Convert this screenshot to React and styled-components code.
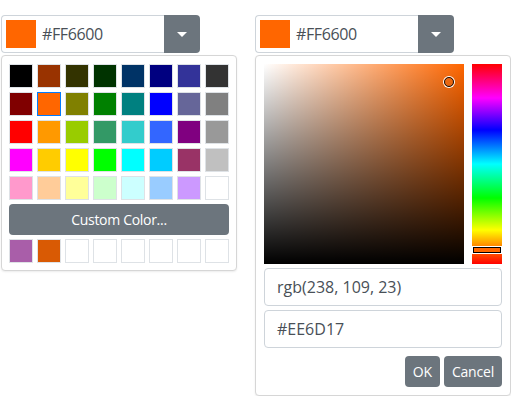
import React from 'react';
import styled, { createGlobalStyle } from 'styled-components';

const GlobalStyle = createGlobalStyle`
  body {
    margin: 0;
    background: #fff;
    font-family: 'Segoe UI', 'Open Sans', sans-serif;
  }
`;

const PALETTE = [
  '#000000', '#993300', '#333300', '#003300', '#003366', '#000080', '#333399', '#333333',
  '#800000', '#FF6600', '#808000', '#008000', '#008080', '#0000FF', '#666699', '#808080',
  '#FF0000', '#FF9900', '#99CC00', '#339966', '#33CCCC', '#3366FF', '#800080', '#999999',
  '#FF00FF', '#FFCC00', '#FFFF00', '#00FF00', '#00FFFF', '#00CCFF', '#993366', '#C0C0C0',
  '#FF99CC', '#FFCC99', '#FFFF99', '#CCFFCC', '#CCFFFF', '#99CCFF', '#CC99FF', '#FFFFFF',
];

const RECENT = ['#A95EA9', '#D95A04', '#fff', '#fff', '#fff', '#fff', '#fff', '#fff'];

function ColorInput({ value }) {
  return (
    <InputGroup>
      <Field>
        <Preview $color={value} />
        <FieldText>{value}</FieldText>
      </Field>
      <ToggleButton>
        <Caret />
      </ToggleButton>
    </InputGroup>
  );
}

export default function App() {
  return (
    <>
      <GlobalStyle />
      <Page>
        <Picker $width={236}>
          <ColorInput value="#FF6600" />
          <Panel $pad="8px 7px 7px">
            <SwatchGrid>
              {PALETTE.map((c, i) => (
                <Swatch key={i} $color={c} $active={c === '#FF6600'} />
              ))}
            </SwatchGrid>
            <CustomButton>Custom Color...</CustomButton>
            <SwatchGrid>
              {RECENT.map((c, i) => (
                <Swatch key={i} $color={c} />
              ))}
            </SwatchGrid>
          </Panel>
        </Picker>

        <Picker $width={256}>
          <ColorInput value="#FF6600" />
          <Panel $pad="8px">
            <SpectrumRow>
              <Saturation $hue="#FF6600">
                <SatHandle style={{ left: 180, top: 13 }} />
              </Saturation>
              <HueBar>
                <HueHandle style={{ top: 183 }} />
              </HueBar>
            </SpectrumRow>
            <TextBox>rgb(238, 109, 23)</TextBox>
            <TextBox>#EE6D17</TextBox>
            <Actions>
              <ActionButton>OK</ActionButton>
              <ActionButton>Cancel</ActionButton>
            </Actions>
          </Panel>
        </Picker>
      </Page>
    </>
  );
}

const Page = styled.div`
  display: flex;
  align-items: flex-start;
  gap: 18px;
  padding: 15px 0 0 1px;
`;

const Picker = styled.div`
  width: ${p => p.$width}px;
  display: flex;
  flex-direction: column;
  gap: 2px;
`;

const InputGroup = styled.div`
  width: 199px;
  height: 38px;
  display: flex;
  box-sizing: border-box;
`;

const Field = styled.div`
  flex: 1;
  display: flex;
  align-items: center;
  gap: 6px;
  padding: 4px;
  border: 1px solid #ced4da;
  border-right: none;
  border-radius: 4px 0 0 4px;
  box-sizing: border-box;
`;

const Preview = styled.div`
  width: 30px;
  height: 28px;
  background: ${p => p.$color};
`;

const FieldText = styled.span`
  font-size: 16px;
  letter-spacing: -0.4px;
  color: #495057;
`;

const ToggleButton = styled.div`
  width: 36px;
  background: #6c757d;
  border-radius: 0 4px 4px 0;
  display: flex;
  align-items: center;
  justify-content: center;
`;

const Caret = styled.div`
  width: 0;
  height: 0;
  border-left: 5px solid transparent;
  border-right: 5px solid transparent;
  border-top: 5px solid #fff;
`;

const Panel = styled.div`
  border: 1px solid #d6d6d6;
  border-radius: 4px;
  padding: ${p => p.$pad};
  box-shadow: 0 1px 2px rgba(0, 0, 0, 0.08);
  display: flex;
  flex-direction: column;
  gap: 4px;
  background: #fff;
`;

const SwatchGrid = styled.div`
  display: grid;
  grid-template-columns: repeat(8, 24px);
  grid-auto-rows: 24px;
  gap: 4px;
`;

const Swatch = styled.div`
  box-sizing: border-box;
  background: ${p => p.$color};
  border: 1px solid ${p => (p.$active ? '#007bff' : '#dee2e6')};
`;

const CustomButton = styled.div`
  height: 31px;
  border-radius: 4px;
  background: #6c757d;
  color: #fff;
  font-size: 14px;
  letter-spacing: -0.3px;
  display: flex;
  align-items: center;
  justify-content: center;
`;

const SpectrumRow = styled.div`
  display: flex;
  gap: 8px;
`;

const Saturation = styled.div`
  position: relative;
  width: 200px;
  height: 200px;
  background:
    linear-gradient(to top, #000, rgba(0, 0, 0, 0)),
    linear-gradient(to right, #fff, rgba(255, 255, 255, 0)),
    ${p => p.$hue};
`;

const SatHandle = styled.div`
  position: absolute;
  width: 10px;
  height: 10px;
  box-sizing: border-box;
  border: 1.5px solid #111;
  border-radius: 50%;
  box-shadow: 0 0 0 1px #fff;
`;

const HueBar = styled.div`
  position: relative;
  width: 30px;
  height: 200px;
  background: linear-gradient(
    to bottom,
    #f00 0%,
    #f0f 17%,
    #00f 33%,
    #0ff 50%,
    #0f0 67%,
    #ff0 83%,
    #f00 100%
  );
`;

const HueHandle = styled.div`
  position: absolute;
  left: 1px;
  right: 1px;
  height: 6px;
  box-sizing: border-box;
  background: #ff6600;
  border: 1px solid #000;
  box-shadow: 0 0 0 1px #fff;
`;

const TextBox = styled.div`
  height: 38px;
  box-sizing: border-box;
  border: 1px solid #ced4da;
  border-radius: 4px;
  padding: 0 12px;
  display: flex;
  align-items: center;
  font-size: 16px;
  color: #495057;
`;

const Actions = styled.div`
  display: flex;
  justify-content: flex-end;
  gap: 4px;
  margin-top: 4px;
`;

const ActionButton = styled.div`
  height: 31px;
  padding: 0 8px;
  border-radius: 4px;
  background: #6c757d;
  color: #fff;
  font-size: 14px;
  letter-spacing: -0.2px;
  display: flex;
  align-items: center;
`;
